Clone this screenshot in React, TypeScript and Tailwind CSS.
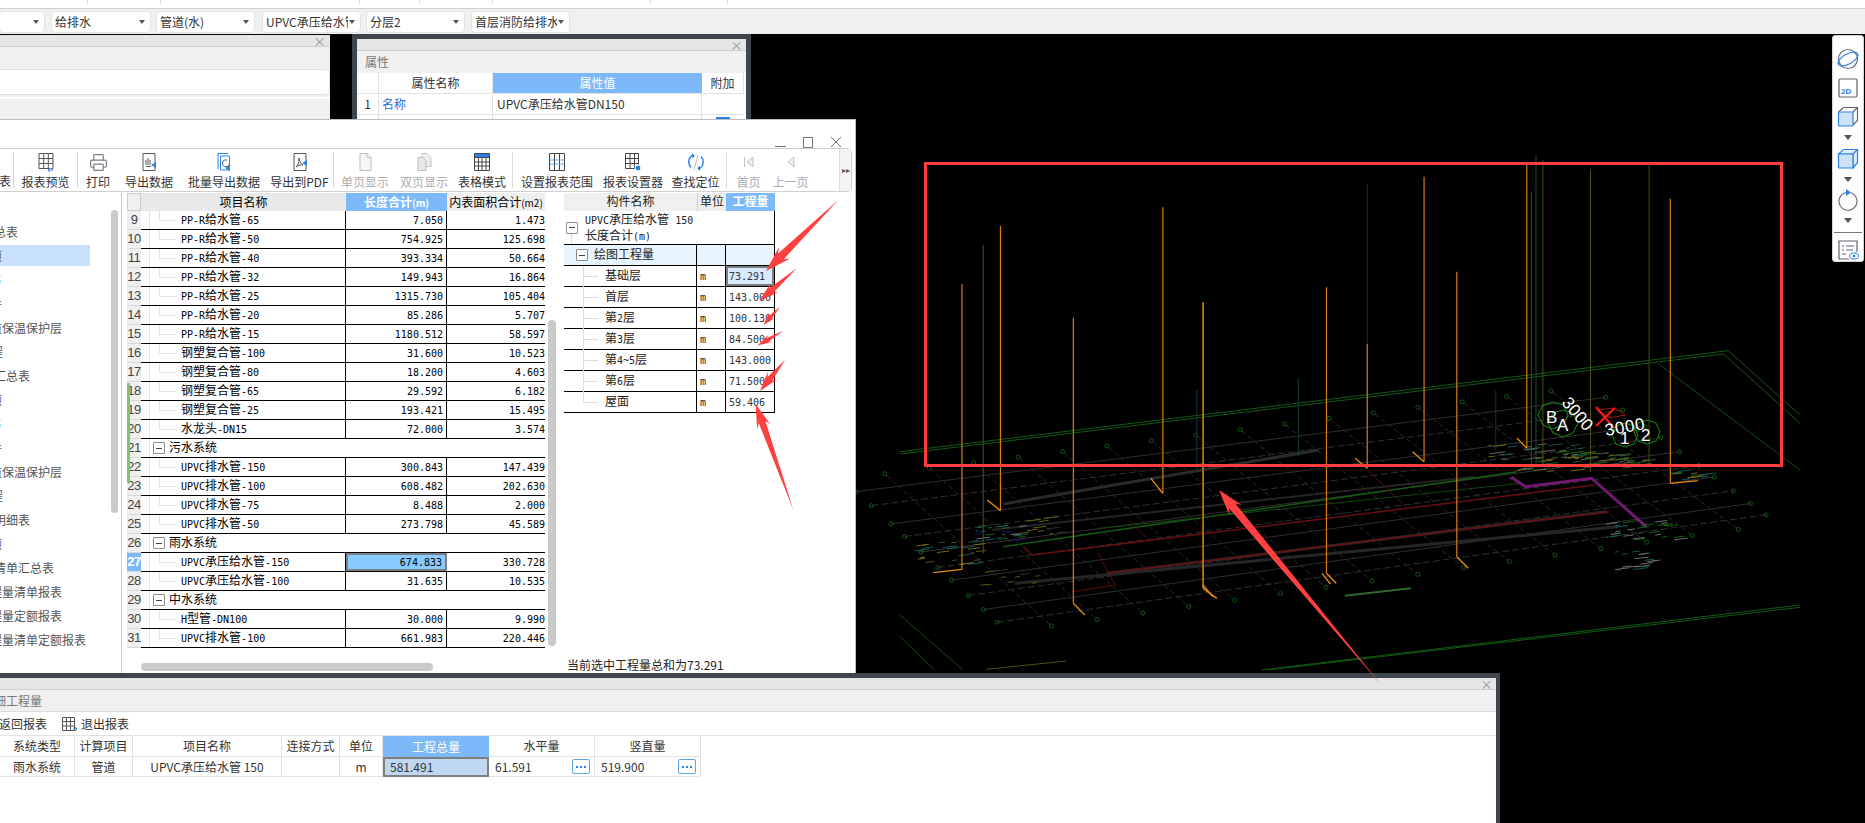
import React from "react";
import { Printer } from "lucide-react";

const fx = (x: number) => 900 + x * 0.574;
const fy = (y: number) => 150 + y / 3;
type Pt = [number, number];
const seg = (a: Pt, b: Pt, c: string, w = 1, dash?: string, key?: string) => (
  <line key={key} x1={fx(a[0])} y1={fy(a[1])} x2={fx(b[0])} y2={fy(b[1])} stroke={c} strokeWidth={w} strokeDasharray={dash} />
);
const poly = (pts: Pt[], c: string, w = 1, key?: string) => (
  <polyline key={key} points={pts.map((p) => `${fx(p[0])},${fy(p[1])}`).join(" ")} stroke={c} strokeWidth={w} fill="none" />
);

const TL: Pt = [-50, 1000], TR: Pt = [1180, 735], BR: Pt = [1480, 1115], BL: Pt = [215, 1420];
const bil = (u: number, v: number): Pt => {
  const ax = TL[0] + (TR[0] - TL[0]) * u, ay = TL[1] + (TR[1] - TL[1]) * u;
  const bx = BL[0] + (BR[0] - BL[0]) * u, by = BL[1] + (BR[1] - BL[1]) * u;
  return [ax + (bx - ax) * v, ay + (by - ay) * v];
};
function rng(seed: number) {
  let s = seed;
  return () => {
    s = (s * 16807) % 2147483647;
    return s / 2147483647;
  };
}
function cluster(k: string, cx: number, cy: number, w: number, h: number, colors: string[], n: number, seed: number) {
  const r = rng(seed);
  const out: React.ReactNode[] = [];
  for (let i = 0; i < n; i++) {
    const x = cx + (r() - 0.5) * w, y = cy + (r() - 0.5) * h, l = 5 + r() * 22;
    out.push(seg([x, y], [x + l, y - l * 0.22], colors[Math.floor(r() * colors.length)], 1, undefined, `${k}${i}`));
  }
  return out;
}

function CadDrawing() {
  const orange: [number, number, number][] = [
    [108, 402, 1258], [175, 228, 1082], [302, 503, 1360], [458, 172, 1030], [528, 457, 1315], [743, 412, 1270],
    [814, 582, 955], [913, 80, 935], [970, 365, 1220], [1092, 45, 895], [1342, 146, 1000],
  ];
  const feet: [Pt, Pt][] = [
    [[108, 1258], [58, 1268]], [[175, 1082], [152, 1050]], [[302, 1360], [322, 1395]], [[458, 1030], [437, 985]],
    [[528, 1315], [552, 1345]], [[743, 1270], [760, 1300]], [[814, 955], [793, 925]], [[913, 935], [893, 905]],
    [[970, 1220], [990, 1255]], [[1092, 895], [1075, 865]], [[1342, 1000], [1390, 992]], [[528, 1305], [545, 1340]], [[735, 1270], [750, 1302]],
  ];
  const vs = [0.04, 0.14, 0.27, 0.36, 0.47, 0.58, 0.67, 0.78, 0.88, 0.97];
  const us = Array.from({ length: 16 }, (_, i) => 0.03 + i * 0.063);
  const circles: Pt[] = [];
  us.forEach((u) => {
    circles.push(bil(u, -0.05));
    circles.push(bil(u, 1.04));
  });
  vs.forEach((v) => {
    circles.push(bil(-0.03, v));
    circles.push(bil(1.03, v));
  });
  return (
    <svg className="absolute left-0 top-0" width={1865} height={823}>
      {vs.map((v, i) => seg(bil(-0.03, v), bil(1.03, v), "#2f2f2f", 1, i % 2 ? "7 3" : undefined, `v${i}`))}
      {us.map((u, i) => seg(bil(u, -0.04), bil(u, 1.03), "#2a2a2a", 1, "5 3", `u${i}`))}
      {seg([180, 1062], [730, 900], "#2a2a2a", 3)}
      {seg([360, 1270], [1230, 1085], "#262626", 3)}
      {seg([160, 1140], [1000, 980], "#242424", 2)}
      {seg([200, 1300], [1250, 1130], "#262626", 3)}
      {poly([[0, 905], [1443, 602], [1568, 795]], "#125a12")}
      {poly([[0, 912], [1435, 612], [1568, 820]], "#125a12")}
      {seg([1320, 640], [1568, 960], "#0f4d0f")}
      {poly([[630, 1560], [1568, 1365]], "#125a12")}
      {poly([[640, 1560], [1568, 1372]], "#125a12")}
      {seg([0, 1395], [110, 1560], "#0f4d0f")}
      {seg([0, 1460], [60, 1560], "#0f4d0f")}
      {seg([775, 1337], [890, 1315], "#2f662f", 2)}
      {seg([150, 1558], [290, 1533], "#4f4f10")}
      {seg([180, 1190], [1075, 965], "#155a15", 1.5)}
      {seg([350, 1135], [1080, 1000], "#114511", 1)}
      {poly([[215, 1190], [230, 1215], [1210, 1005]], "#6a0f0f", 1.5)}
      {poly([[360, 1270], [1235, 1085]], "#6a0f0f", 1.5)}
      {poly([[300, 1325], [375, 1305], [345, 1210]], "#5d0d0d", 1)}
      {poly([[400, 1112], [430, 1165]], "#5d0d0d", 1)}
      {poly([[815, 960], [882, 1072]], "#5d0d0d", 1)}
      {poly([[1065, 982], [1090, 1010], [1205, 985], [1300, 1130]], "#6f1a6f", 3)}
      <g opacity="0.7">
        {cluster("a", 1110, 925, 170, 80, ["#a09514", "#1d8a1d", "#8a8a8a", "#1d7a7a"], 70, 11)}
        {cluster("b", 1240, 935, 110, 50, ["#a09514", "#1d8a1d", "#666"], 34, 23)}
        {cluster("c", 1290, 1140, 120, 60, ["#9a9a9a", "#1d8a1d", "#1d7a7a"], 26, 37)}
        {cluster("d", 80, 1210, 110, 70, ["#a09514", "#7a7a14", "#1d7a7a"], 26, 41)}
        {cluster("e", 170, 1150, 80, 50, ["#9a9a9a", "#1d7a7a", "#1c1c9c", "#1d8a1d"], 26, 53)}
        {cluster("f", 1280, 1235, 70, 60, ["#9a9a9a", "#1d7a7a"], 18, 61)}
        {cluster("g", 1370, 975, 60, 30, ["#a09514", "#1d7a7a"], 14, 71)}
        {cluster("h", 240, 1130, 70, 50, ["#8a8a14", "#444"], 10, 83)}
        {cluster("i", 190, 1290, 100, 60, ["#7a7a14", "#444"], 12, 97)}
      </g>
      {circles.map((p, i) => (
        <circle key={i} cx={fx(p[0])} cy={fy(p[1])} r={2} fill="none" stroke="#145a14" />
      ))}
      {seg([145, 285], [145, 1210], "#4d5410", 1)}
      {seg([814, 100], [814, 580], "#0c343f", 1)}
      {seg([694, 685], [694, 920], "#0f3b3e", 1)}
      {seg([517, 720], [517, 960], "#0c343f", 1)}
      {seg([1038, 720], [1038, 900], "#103e10", 1)}
      {seg([1100, 125], [1100, 960], "#175c17", 1)}
      {seg([1108, 15], [1108, 950], "#254f25", 1)}
      {seg([1120, 30], [1120, 945], "#4d5410", 1)}
      {seg([1203, 60], [1203, 965], "#4d5410", 1)}
      {seg([1305, 45], [1305, 950], "#345410", 1)}
      {orange.map(([x, a, b], i) => seg([x, a], [x, b], "#d67f10", i === 4 ? 1.6 : 1.2, undefined, `o${i}`))}
      {feet.map(([a, b], i) => seg(a, b, "#e58a10", 1.4, undefined, `f${i}`))}
      <polygon points="1553,402 1563,405 1568,415 1563,425 1553,429 1543,425 1538,415 1543,405" fill="none" stroke="#1b8a1b" />
      <polygon points="1563,410 1573,413 1578,423 1573,433 1563,437 1553,433 1548,423 1553,413" fill="none" stroke="#1b8a1b" />
      <polygon points="1625,423 1634,426 1638,435 1634,444 1625,447 1616,444 1612,435 1616,426" fill="none" stroke="#1b8a1b" />
      <polygon points="1647,420 1656,423 1660,432 1656,441 1647,444 1638,441 1634,432 1638,423" fill="none" stroke="#1b8a1b" />
      <polygon points="1597,410 1615,408 1625,415 1610,418" fill="none" stroke="#a01818" />
      <line x1="1596" y1="407" x2="1614" y2="428" stroke="#ff1a1a" strokeWidth="2" />
      <line x1="1596" y1="426" x2="1615" y2="408" stroke="#ff1a1a" strokeWidth="2" />
      <g fill="#fff" fontFamily="'Liberation Sans',sans-serif" fontSize="17">
        <text x="1546" y="423">B</text>
        <text x="1557" y="431">A</text>
        <text x="1620" y="444">1</text>
        <text x="1641" y="441">2</text>
        <text transform="translate(1561,403) rotate(50)">3000</text>
        <text transform="translate(1606,436) rotate(-10)" textLength="40">3000</text>
      </g>
    </svg>
  );
}

function arrow(t: Pt, h: Pt, w: number, body: number, headLen: number) {
  const dx = h[0] - t[0], dy = h[1] - t[1];
  const L = Math.hypot(dx, dy);
  const ux = dx / L, uy = dy / L, nx = -uy, ny = ux;
  const at = (d: number, o: number) => `${h[0] - ux * d + nx * o},${h[1] - uy * d + ny * o}`;
  return [`${t[0]},${t[1]}`, at(headLen * 0.8, body), at(headLen, w), `${h[0]},${h[1]}`, at(headLen, -w), at(headLen * 0.8, -body)].join(" ");
}
const z5 = (x: number, y: number): Pt => [550 + x / 3, 190 + y / 3];
function Overlay() {
  const list: [Pt, Pt, number, number, number][] = [
    [z5(865, 30), z5(648, 243), 8, 4, 26],
    [z5(740, 235), z5(628, 333), 6, 3, 20],
    [z5(690, 350), z5(640, 405), 4, 2, 13],
    [z5(700, 422), z5(622, 467), 4, 2, 15],
    [z5(705, 510), z5(630, 603), 6, 3, 20],
    [z5(730, 960), z5(617, 642), 7, 3.5, 24],
    [[1382, 686], [1219, 490], 8, 4, 26],
  ];
  return (
    <svg className="absolute left-0 top-0 pointer-events-none" width={1865} height={823}>
      {list.map(([t, h, w, b, l], i) => (
        <polygon key={i} points={arrow(t, h, w, b, l)} fill="#ff4040" />
      ))}
    </svg>
  );
}

const G = "#7a7f87", B = "#2b80ea";
const Ic = ({ children }: { children: React.ReactNode }) => (
  <svg width="22" height="22" viewBox="0 0 22 22" fill="none" strokeWidth="1">
    {children}
  </svg>
);
const gridPath = "M4 2.5h14v15H4zM4 7.5h14M4 12.5h14M8.7 2.5v15M13.3 2.5v15";
const icons: Record<string, React.ReactNode> = {
  preview: (
    <Ic>
      <path d={gridPath} stroke="#555" />
      <path d="M18 19h-5l2-2M13 19l2 2" stroke={B} fill="#fff" />
    </Ic>
  ),
  print: <Printer size={19} color={G} strokeWidth={1.5} />,
  export: (
    <Ic>
      <path d="M5 2.5h12v17H5z" stroke="#555" />
      <path d="M8 9v5M10 7v7M12 9v5M8 15.5h5" stroke="#555" />
      <path d="M13 14l5-3v6z" fill={B} />
    </Ic>
  ),
  batch: (
    <Ic>
      <path d="M5 18V2.5h10M7.500 5h9v14h-9z" stroke={B} />
      <path d="M14 9a3.500 3.500 0 1 0 2 5" stroke="#555" />
      <path d="M12 17l5-3v6z" fill={B} />
    </Ic>
  ),
  pdf: (
    <Ic>
      <path d="M5 2.5h12v17H5z" stroke="#555" />
      <path d="M7 16c3-2 3-7 3-9 0 3 2 6 4 7-2 0-5 0-7 2z" stroke="#555" />
      <path d="M13 12l5-3v6z" fill={B} />
    </Ic>
  ),
  single: (
    <Ic>
      <path d="M6 2.500h7l4 4v13H6zM13 2.500v4h4" stroke="#bdbdbd" fill="#f7f7f7" />
    </Ic>
  ),
  double: (
    <Ic>
      <path d="M9 2.500h5l4 4v9H9z" stroke="#c5c5c5" fill="#eee" />
      <path d="M5 6.500h5l3 3v10H5z" stroke="#bdbdbd" fill="#e8e8e8" />
    </Ic>
  ),
  mode: (
    <Ic>
      <path d="M3.500 2.500h15v4h-15z" fill={B} />
      <path d="M3.500 2.500h15v17h-15zM3.500 6.500h15M3.500 11h15M3.500 15h15M7.500 6.500v13M11 6.500v13M15 6.500v13" stroke="#444" />
    </Ic>
  ),
  range: (
    <Ic>
      <path d="M3.500 2.500h15v17h-15zM8.500 2.500v17M13.500 2.500v17" stroke="#444" />
      <path d="M3.500 9h15M3.500 13h15" stroke={B} strokeDasharray="2 1" />
    </Ic>
  ),
  setting: (
    <Ic>
      <path d="M3.500 2.500h13v15h-13zM3.500 7.500h13M3.500 12.500h13M8 2.500v15M12.500 2.500v15" stroke="#444" />
      <circle cx="16" cy="17" r="3" fill={B} stroke="#fff" />
    </Ic>
  ),
  find: (
    <Ic>
      <path d="M7 4.500a8 8 0 0 0-1 12M15 17.500a8 8 0 0 0 1-12" stroke={B} strokeWidth="1.5" />
      <path d="M7 2l3 3-3 2zM15 20l-3-3 3-2z" fill={B} />
      <path d="M9 19l4-15" stroke="#777" strokeWidth="0.5" />
    </Ic>
  ),
  first: (
    <Ic>
      <path d="M6.500 6v10M15 6l-6 5 6 5z" stroke="#c4c4c4" fill="#efefef" />
    </Ic>
  ),
  prev: (
    <Ic>
      <path d="M14 6l-6 5 6 5z" stroke="#c4c4c4" fill="#efefef" />
    </Ic>
  ),
};

const Sep = () => <div className="w-px h-[36px] bg-[#d9d9d9] shrink-0 mx-[1px]" />;
function Tool({ icon, label, w, off }: { icon: string; label: string; w: string; off?: boolean }) {
  return (
    <div className={`${w} shrink-0 flex flex-col items-center`}>
      <div className="h-[24px] flex items-center justify-center">{icons[icon]}</div>
      <div className={`text-[12px] leading-[16px] whitespace-nowrap ${off ? "text-[#adadad]" : "text-[#333]"}`}>{label}</div>
    </div>
  );
}

const Mixed = ({ t }: { t: string }) => (
  <>
    {t.split(/([\x00-\x7f]+)/).map((p, i) =>
      /^[\x00-\x7f]+$/.test(p) ? (
        <span key={i} className="text-[10px]">
          {p}
        </span>
      ) : (
        <span key={i} className="text-[12px]">
          {p}
        </span>
      )
    )}
  </>
);

type Row = { n: number; name: string; a?: string; b?: string; group?: boolean; last?: boolean; sel?: boolean };
const rows: Row[] = [
  { n: 9, name: "PP-R给水管-65", a: "7.050", b: "1.473" },
  { n: 10, name: "PP-R给水管-50", a: "754.925", b: "125.698" },
  { n: 11, name: "PP-R给水管-40", a: "393.334", b: "50.664" },
  { n: 12, name: "PP-R给水管-32", a: "149.943", b: "16.864" },
  { n: 13, name: "PP-R给水管-25", a: "1315.730", b: "105.404" },
  { n: 14, name: "PP-R给水管-20", a: "85.286", b: "5.707" },
  { n: 15, name: "PP-R给水管-15", a: "1180.512", b: "58.597" },
  { n: 16, name: "钢塑复合管-100", a: "31.600", b: "10.523" },
  { n: 17, name: "钢塑复合管-80", a: "18.200", b: "4.603" },
  { n: 18, name: "钢塑复合管-65", a: "29.592", b: "6.182" },
  { n: 19, name: "钢塑复合管-25", a: "193.421", b: "15.495" },
  { n: 20, name: "水龙头-DN15", a: "72.000", b: "3.574" },
  { n: 21, name: "污水系统", group: true },
  { n: 22, name: "UPVC排水管-150", a: "300.843", b: "147.439" },
  { n: 23, name: "UPVC排水管-100", a: "608.482", b: "202.630" },
  { n: 24, name: "UPVC排水管-75", a: "8.488", b: "2.000" },
  { n: 25, name: "UPVC排水管-50", a: "273.798", b: "45.589" },
  { n: 26, name: "雨水系统", group: true },
  { n: 27, name: "UPVC承压给水管-150", a: "674.833", b: "330.728", sel: true },
  { n: 28, name: "UPVC承压给水管-100", a: "31.635", b: "10.535" },
  { n: 29, name: "中水系统", group: true },
  { n: 30, name: "H型管-DN100", a: "30.000", b: "9.990" },
  { n: 31, name: "UPVC排水管-100", a: "661.983", b: "220.446" },
];

const Minus = ({ cls }: { cls: string }) => (
  <span className={`${cls} w-[12px] h-[12px] border border-[#8c8c8c] rounded-[1px] bg-white flex items-center justify-center shrink-0`}>
    <span className="w-[6px] h-px bg-[#444]" />
  </span>
);

function ReportRow({ r }: { r: Row }) {
  return (
    <div className="flex h-[19px] relative">
      <div
        className={`w-[14px] h-[19px] shrink-0 flex items-center justify-center overflow-hidden border-b font-['Liberation_Sans',sans-serif] text-[13px] tracking-[-0.5px] border-[#d8d8d8] ${
          r.sel ? "bg-[#7db9f8] text-white font-bold" : "bg-[#f0f0f0] text-[#444]"
        }`}
      >
        {r.n}
      </div>
      <div className="flex-1 flex border-b border-black min-w-0 relative text-black">
        <span className="absolute left-[8px] top-0 bottom-0 w-px bg-[#e3e3e3]" />
        {r.group ? (
          <div className="flex items-center h-[18px] relative">
            <Minus cls="ml-[12px]" />
            <span className="ml-[4px] text-[12px]">{r.name}</span>
          </div>
        ) : (
          <>
            <div className="w-[205px] shrink-0 border-r border-black flex items-center relative">
              <span className="absolute left-[18px] top-0 bottom-[9px] w-px bg-[#e3e3e3]" />
              <span className="absolute left-[18px] w-[17px] top-[9px] h-px bg-[#e3e3e3]" />
              <span className="ml-[40px] whitespace-nowrap">
                <Mixed t={r.name} />
              </span>
            </div>
            <div
              className={`w-[101px] shrink-0 flex items-center justify-end pr-[3px] text-[10px] ${
                r.sel ? "bg-[#87cbff] border-2 border-[#7f7f7f]" : "border-r border-black"
              }`}
            >
              {r.a}
            </div>
            <div className="flex-1 flex items-center justify-end text-[10px]">{r.b}</div>
          </>
        )}
      </div>
    </div>
  );
}

const nav: { t: string; ml: string; c?: string; sel?: boolean }[] = [
  { t: "汇总表", ml: "-ml-[18px]" },
  { t: "项", ml: "-ml-[10px]", sel: true },
  { t: "书", ml: "-ml-[11px]", c: "text-[#5aa7e8]" },
  { t: "件", ml: "-ml-[10px]" },
  { t: "管道保温保护层", ml: "-ml-[22px]" },
  { t: "程", ml: "-ml-[9px]" },
  { t: "工汇总表", ml: "-ml-[18px]" },
  { t: "项", ml: "-ml-[10px]" },
  { t: "书", ml: "-ml-[11px]", c: "text-[#5aa7e8]" },
  { t: "件", ml: "-ml-[10px]" },
  { t: "管道保温保护层", ml: "-ml-[22px]" },
  { t: "程", ml: "-ml-[9px]" },
  { t: "工明细表", ml: "-ml-[18px]" },
  { t: "项", ml: "-ml-[10px]" },
  { t: "量清单汇总表", ml: "-ml-[18px]" },
  { t: "程量清单报表", ml: "-ml-[10px]" },
  { t: "程量定额报表", ml: "-ml-[10px]" },
  { t: "程量清单定额报表", ml: "-ml-[10px]" },
];

const treeRows = [
  ["基础层", "73.291"],
  ["首层", "143.000"],
  ["第2层", "100.130"],
  ["第3层", "84.500"],
  ["第4~5层", "143.000"],
  ["第6层", "71.500"],
  ["屋面", "59.406"],
];

function MainWindow() {
  return (
    <div className="absolute left-0 top-[119px] w-[856px] h-[554px] bg-white border-t border-r border-[#bdbdbd] flex flex-col overflow-hidden">
      <div className="h-[28px] shrink-0 flex items-center justify-end pr-[13px] gap-[17px] pt-[16px]">
        <span className="w-[11px] h-px bg-[#777] mt-[9px]" />
        <span className="w-[10px] h-[11px] border border-[#777]" />
        <svg width="12" height="12" viewBox="0 0 12 12">
          <path d="M1 1l10 10M11 1L1 11" stroke="#777" />
        </svg>
      </div>
      <div className="h-[44px] w-[857px] -ml-[5px] shrink-0 border border-[#d0d0d0] rounded-[4px] flex items-center pl-[10px]">
        <div className="w-[13px] shrink-0 overflow-hidden text-[12px] text-[#333] mt-[22px] -ml-[7px]">表</div>
        <Sep />
        <Tool icon="preview" label="报表预览" w="w-[61px]" />
        <Sep />
        <Tool icon="print" label="打印" w="w-[38px]" />
        <Tool icon="export" label="导出数据" w="w-[64px]" />
        <Tool icon="batch" label="批量导出数据" w="w-[86px]" />
        <Tool icon="pdf" label="导出到PDF" w="w-[65px]" />
        <Sep />
        <Tool icon="single" label="单页显示" w="w-[60px]" off />
        <Tool icon="double" label="双页显示" w="w-[58px]" off />
        <Tool icon="mode" label="表格模式" w="w-[58px]" />
        <Sep />
        <Tool icon="range" label="设置报表范围" w="w-[86px]" />
        <Tool icon="setting" label="报表设置器" w="w-[66px]" />
        <Tool icon="find" label="查找定位" w="w-[59px]" />
        <Sep />
        <Tool icon="first" label="首页" w="w-[41px]" off />
        <Tool icon="prev" label="上一页" w="w-[43px]" off />
        <div className="ml-auto w-[12px] h-full border-l border-[#ddd] bg-[#f4f4f4] flex items-center justify-center text-[8px] text-[#555]">▸▸</div>
      </div>
      <div className="mt-[1px] flex-1 flex min-h-0">
        <div className="w-[122px] shrink-0 border-r border-[#cfcfcf] flex">
          <div className="w-[111px] shrink-0 pt-[28px] flex flex-col">
            {nav.map((n, i) => (
              <div
                key={i}
                className={`h-[21px] mb-[3px] w-[90px] flex items-center whitespace-nowrap overflow-visible text-[12px] ${n.sel ? "bg-[#c9e0fa]" : ""} ${
                  n.c ?? "text-[#555]"
                }`}
              >
                <span className={n.ml}>{n.t}</span>
              </div>
            ))}
          </div>
          <div className="w-[7px] h-[303px] mt-[17px] bg-[#cacaca] rounded-[4px]" />
        </div>
        <div className="w-[423px] shrink-0 pl-[5px] flex flex-col relative">
          <div className="flex h-[18px] shrink-0 text-[12px]">
            <div className="w-[14px] bg-[#f0f0f0] border border-[#ccc]" />
            <div className="w-[205px] bg-[#e9e9e9] flex items-center justify-center text-black">项目名称</div>
            <div className="w-[101px] bg-[#7db9f8] text-white font-bold flex items-center justify-center">
              <Mixed t="长度合计(m)" />
            </div>
            <div className="w-[98px] bg-[#efefef] flex items-center justify-center whitespace-nowrap text-black">
              <Mixed t="内表面积合计(m2)" />
            </div>
          </div>
          <div className="w-[418px] shrink-0 font-['DejaVu_Sans_Mono','Noto_Sans_CJK_SC',monospace] text-[10px]">
            {rows.map((r) => (
              <ReportRow key={r.n} r={r} />
            ))}
          </div>
          <div className="w-[292px] h-[8px] ml-[14px] mt-[15px] bg-[#cacaca] rounded-[4px]" />
          <span className="absolute left-[5px] top-[190px] w-[3px] h-[100px] bg-[#7fc46a]" />
        </div>
        <div className="w-[19px] shrink-0">
          <div className="w-[8px] h-[326px] mt-[127px] ml-[3px] bg-[#cacaca] rounded-[4px]" />
        </div>
        <div className="w-[211px] shrink-0 flex flex-col font-['DejaVu_Sans_Mono','Noto_Sans_CJK_SC',monospace] text-[#222]">
          <div className="flex h-[18px] shrink-0 text-[12px]">
            <div className="w-[133px] bg-[#efefef] flex items-center justify-center">构件名称</div>
            <div className="w-[29px] bg-[#efefef] border-l border-[#ccc] flex items-center justify-center">单位</div>
            <div className="w-[49px] bg-[#7db9f8] text-white font-bold flex items-center justify-center">工程量</div>
          </div>
          <div className="w-[211px] h-[34px] border-b border-r border-black relative flex items-center">
            <Minus cls="ml-[2px]" />
            <div className="ml-[7px] leading-[14px] whitespace-nowrap">
              <div>
                <Mixed t="UPVC承压给水管 150" />
              </div>
              <div>
                <Mixed t="长度合计(m)" />
              </div>
            </div>
            <span className="absolute left-[7px] top-[23px] bottom-0 w-px bg-[#ddd]" />
          </div>
          <div className="w-[211px] h-[21px] flex border-b border-r border-black bg-[#e8f5ff]">
            <div className="w-[133px] border-r border-black flex items-center text-[12px]">
              <Minus cls="ml-[12px]" />
              <span className="ml-[6px]">绘图工程量</span>
            </div>
            <div className="w-[29px] border-r border-black" />
          </div>
          {treeRows.map(([n, v], i) => (
            <div key={n} className="w-[211px] h-[21px] flex border-b border-r border-black">
              <div className="w-[133px] border-r border-black flex items-center text-[12px] relative">
                <span className={`absolute left-[19px] top-0 w-px bg-[#ddd] ${i === 6 ? "h-[10px]" : "h-[21px]"}`} />
                <span className="absolute left-[19px] top-[10px] w-[15px] h-px bg-[#ddd]" />
                <span className="ml-[41px]">
                  <Mixed t={n} />
                </span>
              </div>
              <div className="w-[29px] border-r border-black flex items-center pl-[3px] text-[10px]">m</div>
              <div className={`flex-1 flex items-center text-[10px] text-[#333] ${i === 0 ? "bg-[#d8ebff] border-2 border-[#7f7f7f] pl-[1px]" : "pl-[3px]"}`}>{v}</div>
            </div>
          ))}
          <div className="mt-auto pl-[3px] text-[12px] leading-[16px] font-['Noto_Sans_CJK_SC',sans-serif] whitespace-nowrap">当前选中工程量总和为73.291</div>
        </div>
      </div>
    </div>
  );
}

function Side() {
  const tri = (
    <svg width="12" height="6" viewBox="0 0 12 6" className="my-[7px]">
      <path d="M2 0h8L6 5z" fill="#555" />
    </svg>
  );
  return (
    <div className="absolute left-[1832px] top-[35px] w-[32px] h-[227px] bg-white border border-[#d5d5d5] rounded-[3px] flex flex-col items-center pt-[12px]">
      <svg width="24" height="22" viewBox="0 0 24 22" fill="none">
        <circle cx="12" cy="11" r="9.500" stroke="#6c7280" strokeWidth="1.200" />
        <ellipse cx="12" cy="11" rx="11" ry="5" transform="rotate(-28 12 11)" stroke={B} strokeWidth="1.200" />
      </svg>
      <svg width="22" height="22" viewBox="0 0 22 22" fill="none" className="mt-[7px]">
        <rect x="2" y="2" width="18" height="18" rx="1.500" stroke="#5e6470" strokeWidth="1.200" />
        <text x="4" y="17" fontSize="8" fontWeight="700" fill={B} fontFamily="'Liberation Sans',sans-serif">
          2D
        </text>
      </svg>
      <svg width="22" height="22" viewBox="0 0 22 22" fill="none" className="mt-[7px]">
        <path d="M7 1.500h13.500v13L16 19" stroke="#5e6470" strokeWidth="1.200" />
        <path d="M6.500 1.500L1.500 6M16 6l4.500-4.500" stroke="#5e6470" strokeWidth="1.200" />
        <rect x="1.500" y="6" width="14.500" height="14" rx="1" fill="#cfe2fb" stroke={B} strokeWidth="1.200" />
      </svg>
      {tri}
      <svg width="22" height="22" viewBox="0 0 22 22" fill="none">
        <path d="M1.500 6L6.500 1.500h14v13L16 20V6z" fill="#e2edfc" stroke={B} strokeWidth="1.200" />
        <path d="M16 6l4.500-4.500" stroke={B} strokeWidth="1.200" />
        <rect x="1.500" y="6" width="14.500" height="14" rx="1" fill="#cfe2fb" stroke={B} strokeWidth="1.200" />
      </svg>
      {tri}
      <svg width="22" height="22" viewBox="0 0 22 22" fill="none" className="-mt-[1px]">
        <path d="M9 3.500a9 9 0 1 0 5 .3" stroke="#6c7280" strokeWidth="1.200" />
        <path d="M9 0l5 3.500-5 3.500z" fill={B} />
      </svg>
      {tri}
      <div className="w-[28px] h-px bg-[#777] mt-[1px]" />
      <svg width="22" height="22" viewBox="0 0 22 22" fill="none" className="mt-[6px]">
        <path d="M12 20H2V2h18v11" stroke="#5e6470" strokeWidth="1.200" />
        <path d="M5 7h2M9 7h8M5 11h2M9 11h7M5 15h4" stroke="#5e6470" />
        <ellipse cx="17" cy="17" rx="4.500" ry="3" stroke={B} />
        <circle cx="17" cy="17" r="1.300" fill={B} />
      </svg>
    </div>
  );
}

const dropdowns: [string, string][] = [
  ["", "w-[46px] -ml-[1px] mr-[6px]"],
  ["给排水", "w-[100px] mr-[5px]"],
  ["管道(水)", "w-[99px] mr-[7px]"],
  ["UPVC承压给水管", "w-[99px] mr-[5px]"],
  ["分层2", "w-[99px] mr-[6px]"],
  ["首层消防给排水", "w-[99px]"],
];

export default function App() {
  const ticks = ["left-[87px]", "left-[160px]", "left-[359px]", "left-[419px]", "left-[492px]", "left-[650px]", "left-[727px]"];
  return (
    <div className="relative w-[1865px] h-[823px] overflow-hidden flex flex-col bg-black text-[#333] font-['Noto_Sans_CJK_SC','Liberation_Sans',sans-serif]">
      <div className="h-[9px] shrink-0 bg-white border-b border-[#cfcfcf] relative">
        {ticks.map((t) => (
          <span key={t} className={`absolute top-0 h-[4px] w-px bg-[#d8d8d8] ${t}`} />
        ))}
      </div>
      <div className="h-[25px] shrink-0 bg-[#f0f0f0] flex items-start pt-[2px]">
        {dropdowns.map(([t, w]) => (
          <div key={t || "x"} className={`${w} h-[22px] bg-white border border-[#e2e2e2] rounded-[4px] flex items-center pl-[3px] pr-[2px] text-[12px] text-[#333] overflow-hidden`}>
            <span className="flex-1 overflow-hidden whitespace-nowrap">{t}</span>
            <svg width="6" height="4" viewBox="0 0 6 4" className="shrink-0 ml-[1px] mr-[3px]">
              <path d="M0 0h6L3 4z" fill="#555" />
            </svg>
          </div>
        ))}
      </div>
      <div className="flex-1 bg-black" />

      <CadDrawing />

      <div className="absolute left-0 top-[35px] w-[330px] h-[84px] bg-[#f0f0f0] flex flex-col">
        <div className="h-[12px] bg-[#e6e6e6] border-b border-[#cfcfcf] flex justify-end items-center pr-[4px] text-[#999] text-[13px] leading-none">×</div>
        <div className="h-[22px]" />
        <div className="h-[26px] -ml-[4px] bg-white rounded-[3px] border border-[#e2e2e2]" />
        <div className="h-[2px]" />
        <div className="h-[2px] bg-white" />
      </div>

      <div className="absolute left-[352px] top-[34px] w-[399px] h-[90px] border-t-[5px] border-x-[5px] border-[#3f454d] bg-[#f0f0f0] flex flex-col">
        <div className="h-[12px] bg-[#e6e6e6] border-b border-[#cfcfcf] flex justify-end items-center pr-[3px] text-[#999] text-[13px] leading-none">×</div>
        <div className="h-[22px] flex items-center pl-[8px] text-[12px] text-[#777]">属性</div>
        <div className="bg-white flex-1 text-[12px] pr-[2px]">
          <div className="flex h-[21px] border-b border-[#e2e2e2]">
            <div className="w-[22px] border-r border-[#e2e2e2]" />
            <div className="w-[114px] border-r border-[#e2e2e2] flex items-center justify-center">属性名称</div>
            <div className="w-[209px] bg-[#7db9f8] text-white flex items-center justify-center">属性值</div>
            <div className="flex-1 flex items-center justify-center border-r border-[#e2e2e2]">附加</div>
          </div>
          <div className="flex h-[21px] border-b border-[#e2e2e2]">
            <div className="w-[22px] border-r border-[#e2e2e2] flex items-center justify-center">1</div>
            <div className="w-[114px] border-r border-[#e2e2e2] flex items-center pl-[3px] text-[#2a6fd8]">名称</div>
            <div className="w-[209px] border-r border-[#e2e2e2] flex items-center pl-[4px]">UPVC承压给水管DN150</div>
          </div>
          <div className="flex h-[5px]">
            <div className="w-[22px] border-r border-[#e2e2e2]" />
            <div className="w-[114px] border-r border-[#e2e2e2]" />
            <div className="w-[209px] border-r border-[#e2e2e2]" />
            <div className="w-[14px] h-[2px] ml-[14px] mt-[2px] bg-[#2b80ea]" />
          </div>
        </div>
      </div>

      <MainWindow />

      <div className="absolute left-0 top-[673px] w-[1500px] h-[150px] border-t-[5px] border-r-[4px] border-[#3f454d] bg-white flex flex-col text-[12px]">
        <div className="h-[12px] shrink-0 bg-[#e6e6e6] border-b border-[#cfcfcf] flex justify-end items-center pr-[3px] text-[#999] text-[13px] leading-none">×</div>
        <div className="h-[22px] shrink-0 bg-[#f0f0f0] border-b border-[#dcdcdc] flex items-center text-[#777]">
          <span className="-ml-[18px]">明细工程量</span>
        </div>
        <div className="h-[24px] shrink-0 flex items-center border-b border-[#e2e2e2] text-[#333]">
          <span className="-ml-[1px]">返回报表</span>
          <svg width="16" height="16" viewBox="0 0 16 16" fill="none" className="ml-[14px]">
            <path d="M1.500 1.500h12v13h-12zM1.500 5.500h12M1.500 10h12M5.500 1.500v13M9.500 1.500v13" stroke="#555" />
            <path d="M12 13h4M14 11l2 2-2 2" stroke={B} />
          </svg>
          <span className="ml-[4px]">退出报表</span>
        </div>
        <div className="grid grid-cols-[75px_58px_149px_58px_43px_106px_106px_106px] w-[701px] text-[12px] text-[#333]">
          {["系统类型", "计算项目", "项目名称", "连接方式", "单位"].map((h) => (
            <div key={h} className="h-[21px] flex items-center justify-center border-r border-b border-[#e2e2e2]">
              {h}
            </div>
          ))}
          <div className="h-[21px] flex items-center justify-center bg-[#7db9f8] text-white">工程总量</div>
          <div className="h-[21px] flex items-center justify-center border-r border-b border-[#e2e2e2]">水平量</div>
          <div className="h-[21px] flex items-center justify-center border-r border-b border-[#e2e2e2]">竖直量</div>
          {["雨水系统", "管道", "UPVC承压给水管 150", "", "m"].map((h, i) => (
            <div key={i} className="h-[20px] flex items-center justify-center border-r border-b border-[#e2e2e2]">
              {h}
            </div>
          ))}
          <div className="h-[20px] flex items-center bg-[#bfd7f0] border-2 border-[#7f7f7f] pl-[5px]">581.491</div>
          {["61.591", "519.900"].map((v) => (
            <div key={v} className="h-[20px] flex items-center justify-between pl-[6px] pr-[4px] border-r border-b border-[#e2e2e2]">
              <span>{v}</span>
              <span className="w-[18px] h-[15px] border border-[#5aa7e8] rounded-[2px] flex items-center justify-center gap-[2px]">
                <span className="w-[2px] h-[2px] bg-[#2b80ea]" />
                <span className="w-[2px] h-[2px] bg-[#2b80ea]" />
                <span className="w-[2px] h-[2px] bg-[#2b80ea]" />
              </span>
            </div>
          ))}
        </div>
      </div>

      <Side />

      <svg className="absolute left-[924px] top-[162px]" width="860" height="306" fill="none">
        <rect x="1.500" y="1.500" width="856" height="302" stroke="#ff3d3d" strokeWidth="3" />
      </svg>

      <Overlay />
    </div>
  );
}
